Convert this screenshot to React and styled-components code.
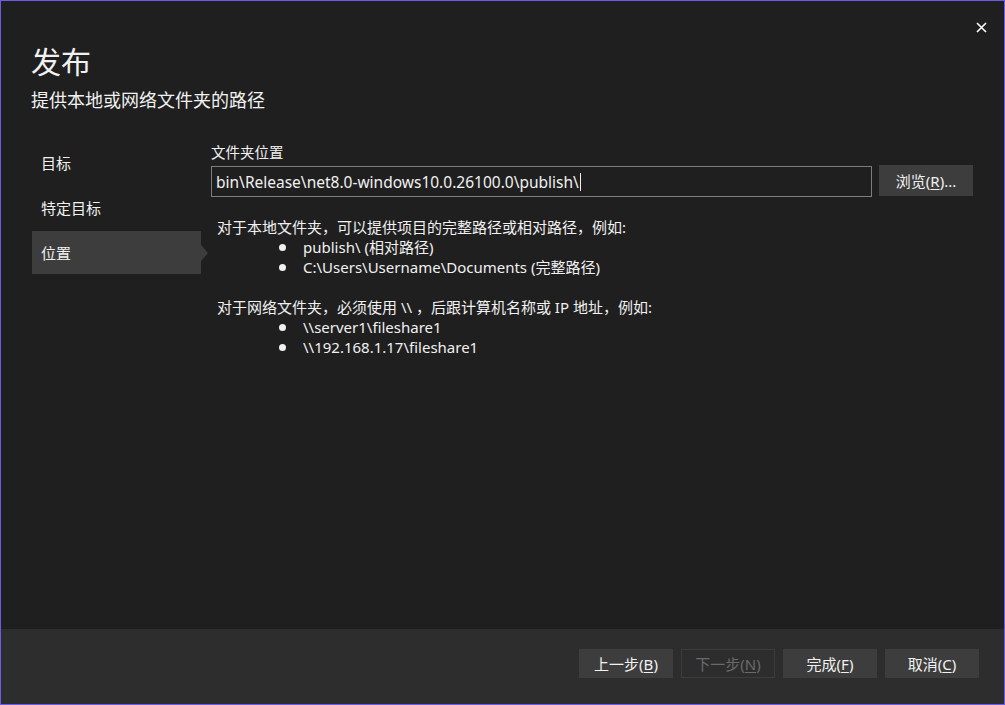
import React from "react";
import styled, { createGlobalStyle } from "styled-components";

const Global = createGlobalStyle`
  html, body {
    margin: 0;
    padding: 0;
    background: #1f1f1f;
  }
  * {
    box-sizing: border-box;
  }
`;

const font = `"Noto Sans", "Noto Sans CJK SC", sans-serif`;

const Window = styled.div`
  width: 1005px;
  height: 705px;
  border: 1px solid #6b5ce8;
  background: #1f1f1f;
  color: #f1f1f1;
  font-family: ${font};
  display: flex;
  flex-direction: column;
`;

const Header = styled.div`
  display: flex;
  justify-content: space-between;
  align-items: flex-start;
  padding: 0 0 0 30px;
`;

const Titles = styled.div`
  padding-top: 40px;
`;

const Title = styled.h1`
  margin: 0;
  font-size: 30px;
  font-weight: 400;
  line-height: 42px;
  font-family: ${font};
`;

const Subtitle = styled.div`
  margin-top: 5px;
  font-size: 18px;
  line-height: 24px;
`;

const Close = styled.button`
  width: 46px;
  height: 40px;
  margin: 6px 0 0 0;
  padding: 0;
  border: none;
  background: transparent;
  display: flex;
  align-items: center;
  justify-content: center;
  color: #ffffff;
`;

const Main = styled.div`
  flex: 1;
  display: flex;
  padding: 28px 31px 0 31px;
`;

const Side = styled.nav`
  width: 169px;
  display: flex;
  flex-direction: column;
  gap: 2px;
  padding-top: 1px;
`;

const NavItem = styled.div`
  position: relative;
  height: 43px;
  display: flex;
  align-items: center;
  padding-left: 9px;
  font-size: 15px;
  background: ${(p) => (p.$active ? "#3d3d3d" : "transparent")};

  &::after {
    content: "";
    display: ${(p) => (p.$active ? "block" : "none")};
    position: absolute;
    right: -7px;
    top: 50%;
    margin-top: -8px;
    border-left: 7px solid #3d3d3d;
    border-top: 8px solid transparent;
    border-bottom: 8px solid transparent;
  }
`;

const Content = styled.div`
  flex: 1;
  padding: 2px 0 0 10px;
`;

const Label = styled.div`
  font-size: 14.5px;
  line-height: 20px;
`;

const FieldRow = styled.div`
  display: flex;
  gap: 7px;
  margin-top: 3px;
  align-items: flex-start;
`;

const Input = styled.div`
  flex: 1;
  height: 31px;
  margin-top: 1px;
  border: 1px solid #7d7d7d;
  background: #1f1f1f;
  display: flex;
  align-items: center;
  padding-left: 4px;
  font-size: 15.5px;
  white-space: nowrap;
`;

const Caret = styled.span`
  display: inline-block;
  width: 1px;
  height: 18px;
  background: #f1f1f1;
  margin-left: 1px;
`;

const Button = styled.button`
  width: 94px;
  height: ${(p) => p.$h || 29}px;
  border: 1px solid #3d3d3d;
  background: ${(p) => (p.disabled ? "transparent" : "#3d3d3d")};
  color: ${(p) => (p.disabled ? "#6a6a6a" : "#f1f1f1")};
  font-family: ${font};
  font-size: 15px;
  padding: 0;
  display: flex;
  align-items: center;
  justify-content: center;

  u {
    text-decoration: underline;
    text-underline-offset: 2px;
  }
`;

const Info = styled.div`
  margin-top: 20px;
  padding-left: 6px;
  font-size: 15px;
  line-height: 20px;
`;

const Para = styled.div`
  margin-bottom: 20px;
`;

const List = styled.ul`
  list-style: none;
  margin: 0;
  padding: 0 0 0 62px;
`;

const Item = styled.li`
  display: flex;
  align-items: center;

  &::before {
    content: "";
    width: 7px;
    height: 7px;
    border-radius: 50%;
    background: #f1f1f1;
    margin-right: 17px;
  }
`;

const Footer = styled.div`
  height: 75px;
  background: #2d2d2d;
  display: flex;
  justify-content: flex-end;
  align-items: flex-start;
  gap: 8px;
  padding: 20px 25px 0 0;
`;

export default function App() {
  return (
    <>
      <Global />
      <Window>
        <Header>
          <Titles>
            <Title>发布</Title>
            <Subtitle>提供本地或网络文件夹的路径</Subtitle>
          </Titles>
          <Close aria-label="关闭">
            <svg width="11" height="11" viewBox="0 0 11 11">
              <path d="M1 1L10 10M10 1L1 10" stroke="#fff" strokeWidth="1.6" />
            </svg>
          </Close>
        </Header>
        <Main>
          <Side>
            <NavItem>目标</NavItem>
            <NavItem>特定目标</NavItem>
            <NavItem $active>位置</NavItem>
          </Side>
          <Content>
            <Label>文件夹位置</Label>
            <FieldRow>
              <Input>
                bin\Release\net8.0-windows10.0.26100.0\publish\
                <Caret />
              </Input>
              <Button $h={31}>
                浏览(<u>R</u>)...
              </Button>
            </FieldRow>
            <Info>
              <Para>
                对于本地文件夹，可以提供项目的完整路径或相对路径，例如:
                <List>
                  <Item>publish\ (相对路径)</Item>
                  <Item>C:\Users\Username\Documents (完整路径)</Item>
                </List>
              </Para>
              <Para>
                对于网络文件夹，必须使用 \\ ，后跟计算机名称或 IP 地址，例如:
                <List>
                  <Item>\\server1\fileshare1</Item>
                  <Item>\\192.168.1.17\fileshare1</Item>
                </List>
              </Para>
            </Info>
          </Content>
        </Main>
        <Footer>
          <Button>
            上一步(<u>B</u>)
          </Button>
          <Button disabled>
            下一步(<u>N</u>)
          </Button>
          <Button>
            完成(<u>F</u>)
          </Button>
          <Button>
            取消(<u>C</u>)
          </Button>
        </Footer>
      </Window>
    </>
  );
}
